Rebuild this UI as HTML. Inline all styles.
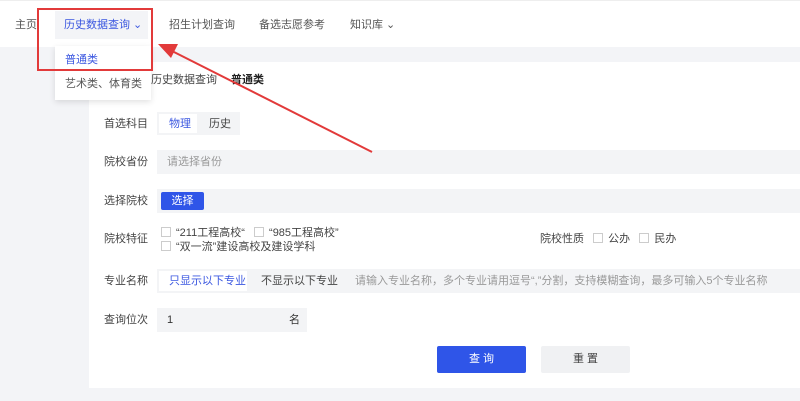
<!DOCTYPE html>
<html><head><meta charset="utf-8"><style>
*{margin:0;padding:0;box-sizing:border-box}
body{width:800px;height:401px;overflow:hidden;background:#f3f4f7;font-family:"Liberation Sans","Noto Sans CJK SC",sans-serif;font-size:11px;line-height:14px;color:#333;position:relative}
.nav{position:absolute;left:0;top:0;width:800px;height:47px;background:#fff;border-top:1px solid #eee}
.nav span{position:absolute;top:17px;font-size:11px;color:#555}
.a{position:absolute}
.card{position:absolute;left:89px;top:62px;width:711px;height:326px;background:#fff}
.lbl{position:absolute;left:104px;color:#444;font-size:11px}
.fld{position:absolute;background:#f3f4f6}
.cb{display:inline-block;width:10px;height:10px;border:1px solid #ccc;background:#fff;vertical-align:-1px;margin-right:5px}
</style></head><body>
<div class="nav">
<span style="left:15px">主页</span>
<div class="a" style="left:55px;top:10px;width:93px;height:28px;background:#f3f4f7"></div>
<span style="left:64px;color:#3b57e0">历史数据查询 ⌄</span>
<span style="left:169px">招生计划查询</span>
<span style="left:259px">备选志愿参考</span>
<span style="left:350px">知识库 ⌄</span>
</div>
<div class="card"></div>
<div class="a" style="left:55px;top:46px;width:96px;height:54px;background:#fff;box-shadow:0 2px 6px rgba(0,0,0,.12)"></div>
<div class="a" style="left:65px;top:53px;color:#3b57e0">普通类</div>
<div class="a" style="left:65px;top:77px;color:#555">艺术类、体育类</div>
<div class="a" style="left:151px;top:73px;color:#444">历史数据查询</div>
<div class="a" style="left:231px;top:73px;color:#222;font-weight:bold">普通类</div>
<div class="a" style="left:37px;top:8px;width:116px;height:63px;border:2px solid #e23a3a"></div>

<div class="lbl" style="top:117px">首选科目</div>
<div class="fld" style="left:157px;top:112px;width:83px;height:23px"></div>
<div class="a" style="left:159px;top:114px;width:38px;height:19px;background:#fff"></div>
<div class="a" style="left:169px;top:117px;color:#3b57e0">物理</div>
<div class="a" style="left:209px;top:117px;color:#444">历史</div>

<div class="lbl" style="top:155px">院校省份</div>
<div class="fld" style="left:157px;top:150px;width:643px;height:24px"></div>
<div class="a" style="left:167px;top:155px;color:#999">请选择省份</div>

<div class="lbl" style="top:194px">选择院校</div>
<div class="fld" style="left:157px;top:189px;width:643px;height:24px"></div>
<div class="a" style="left:161px;top:192px;width:43px;height:18px;background:#2f55e8;border-radius:2px;color:#fff;text-align:center;line-height:18px">选择</div>

<div class="lbl" style="top:232px">院校特征</div>
<div class="a" style="left:161px;top:226px;color:#444"><i class="cb"></i>“211工程高校“ &nbsp;&nbsp;<i class="cb"></i>“985工程高校”</div>
<div class="a" style="left:161px;top:240px;color:#444"><i class="cb"></i>“双一流”建设高校及建设学科</div>
<div class="a" style="left:540px;top:232px;color:#444">院校性质 &nbsp;&nbsp;<i class="cb"></i>公办 &nbsp;&nbsp;<i class="cb"></i>民办</div>

<div class="lbl" style="top:274px">专业名称</div>
<div class="fld" style="left:157px;top:269px;width:643px;height:24px"></div>
<div class="a" style="left:159px;top:271px;width:88px;height:20px;background:#fff"></div>
<div class="a" style="left:169px;top:274px;color:#3b57e0">只显示以下专业</div>
<div class="a" style="left:261px;top:274px;color:#444">不显示以下专业</div>
<div class="a" style="left:355px;top:274px;color:#999">请输入专业名称，多个专业请用逗号“,”分割，支持模糊查询，最多可输入5个专业名称</div>

<div class="lbl" style="top:313px">查询位次</div>
<div class="fld" style="left:157px;top:308px;width:150px;height:24px"></div>
<div class="a" style="left:167px;top:313px">1</div>
<div class="a" style="left:289px;top:313px">名</div>

<div class="a" style="left:437px;top:346px;width:89px;height:27px;background:#2f55e8;border-radius:2px;color:#fff;text-align:center;line-height:27px">查 询</div>
<div class="a" style="left:541px;top:346px;width:89px;height:27px;background:#f0f1f3;border-radius:2px;color:#444;text-align:center;line-height:27px">重 置</div>

<svg class="a" style="left:0;top:0" width="800" height="401">
<line x1="372" y1="152" x2="170" y2="50" stroke="#e23a3a" stroke-width="2"/>
<polygon points="158,44 178,44 171,58" fill="#e23a3a"/>
</svg>
</body></html>
